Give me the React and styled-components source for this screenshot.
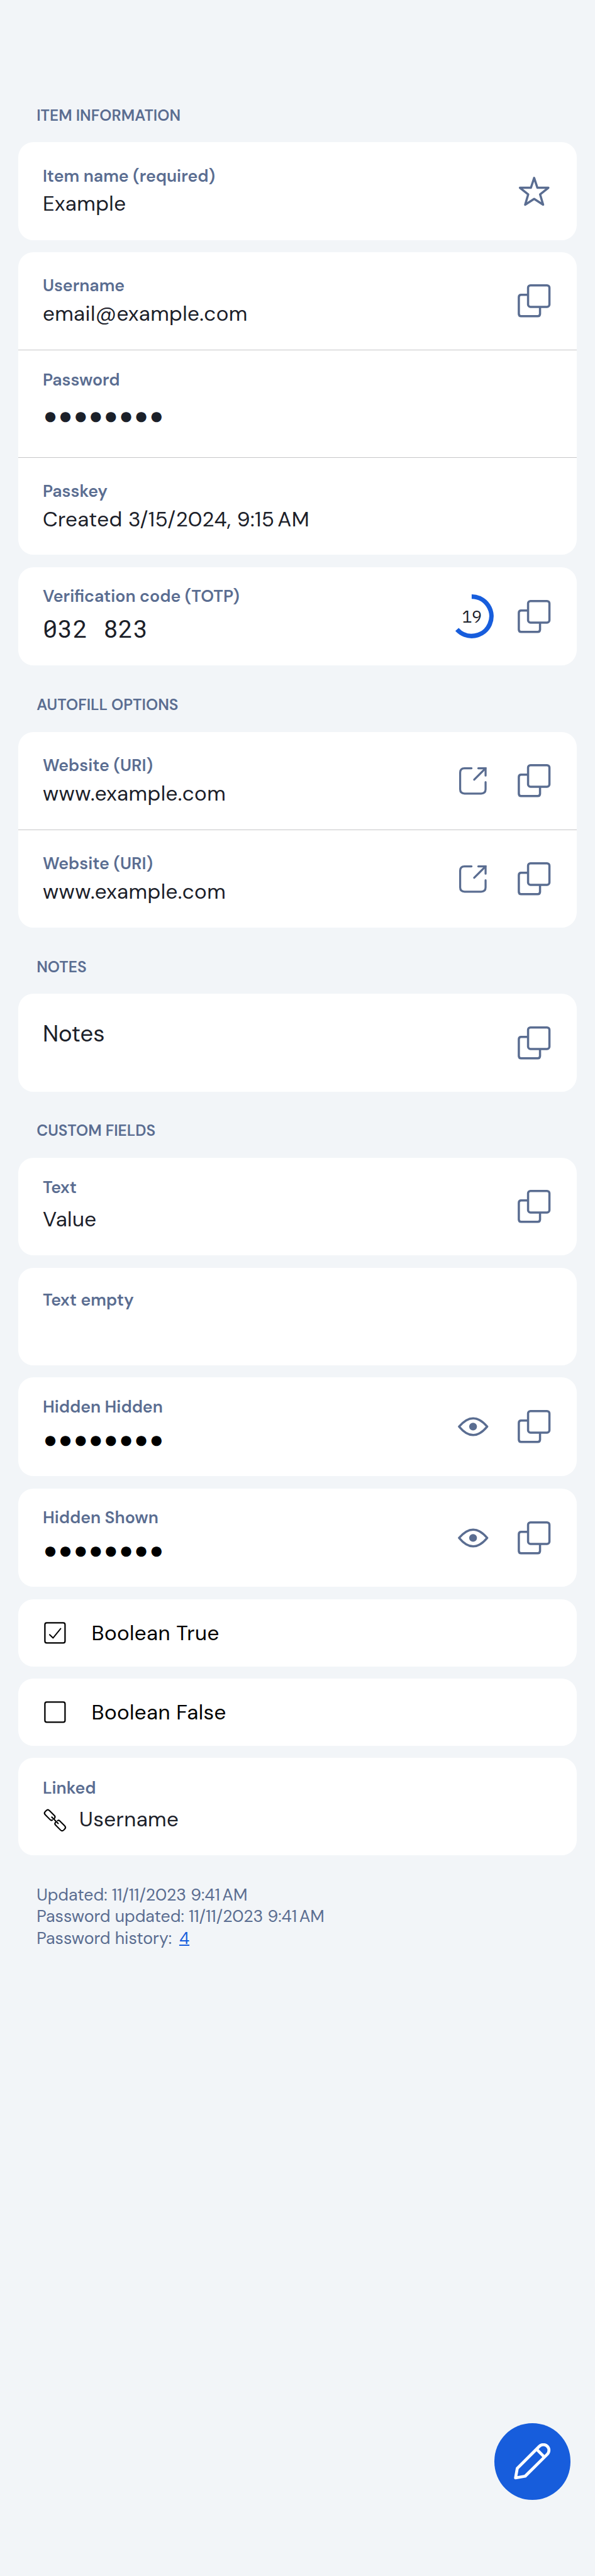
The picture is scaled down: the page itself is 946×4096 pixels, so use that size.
import React from "react";
import styled, { createGlobalStyle } from "styled-components";

/* Design units are 1170 wide; the page is laid out at 946. */
const u = (n) => `${((n * 946) / 1170).toFixed(3)}px`;

const c = {
  bg: "#f2f5f8",
  card: "#ffffff",
  muted: "#5a6d91",
  text: "#1b2029",
  black: "#000000",
  blue: "#175ddc",
  line: "#c6c6c8",
};

const sans = `"DM Sans", Inter, "Liberation Sans", sans-serif`;
const mono = `"Roboto Mono", "DejaVu Sans Mono", monospace`;

const Global = createGlobalStyle`
  body { margin: 0; background: ${c.bg}; }
  * { box-sizing: border-box; }
`;

const Page = styled.main`
  position: relative;
  display: flex;
  flex-direction: column;
  width: 946px;
  height: 4096px;
  padding: ${u(207.6)} ${u(36)} 0;
  background: ${c.bg};
  font-family: ${sans};
  color: ${c.text};
`;

const Section = styled.section`
  display: flex;
  flex-direction: column;
  gap: ${u(24.06)};
  & + & {
    margin-top: ${u(57.8)};
  }
`;

const Heading = styled.h2`
  margin: 0 0 ${u(8.4)};
  padding-left: ${u(36)};
  font-size: ${u(30.4)};
  line-height: ${u(40)};
  font-weight: 600;
  color: ${c.muted};
  text-transform: uppercase;
`;

const Card = styled.div`
  display: flex;
  flex-direction: column;
  background: ${c.card};
  border-radius: ${u(30)};
`;

const Row = styled.div`
  display: flex;
  align-items: center;
  height: ${(p) => u(p.$h || 192)};
  padding: 0 ${u(48)};
  & + & {
    border-top: 1px solid ${c.line};
  }
`;

const Body = styled.div`
  flex: 1;
  align-self: flex-start;
  display: flex;
  flex-direction: column;
  padding-top: ${(p) => u(p.$top)};
`;

const Label = styled.div`
  font-size: ${u(33)};
  line-height: ${u(46)};
  font-weight: 600;
  color: ${c.muted};
`;

const Value = styled.div`
  display: flex;
  align-items: center;
  gap: ${u(24)};
  height: ${u(64)};
  margin-top: ${(p) => u(p.$gap || 0)};
  font-size: ${(p) => u(p.$size || 41)};
  line-height: ${u(64)};
  letter-spacing: ${(p) => (p.$tight ? "0" : "0.42px")};
  white-space: nowrap;
`;

const Code = styled(Value)`
  font-family: ${mono};
  font-size: ${u(48)};
  letter-spacing: 0.75px;
`;

const Dots = styled(Value)`
  padding-left: ${u(1)};
  font-family: "Liberation Sans", sans-serif;
  font-size: ${u(46.4)};
  letter-spacing: 1.45px;
  color: ${(p) => (p.$black ? c.black : c.text)};
`;

const Actions = styled.div`
  display: flex;
  gap: ${u(48)};
`;

const Slot = styled.span`
  display: flex;
  align-items: center;
  justify-content: center;
  width: ${u(72)};
  height: ${u(72)};
  svg {
    flex: none;
    display: block;
    overflow: visible;
  }
`;

const Timer = styled(Slot)`
  display: grid;
  grid-template: 100% / 100%;
  padding-right: ${u(5)};
  > * {
    grid-area: 1 / 1;
    justify-self: center;
    align-self: center;
  }
`;

const Seconds = styled.span`
  font-family: "IBM Plex Mono", ${mono};
  font-size: ${u(33)};
  line-height: 1;
  letter-spacing: -0.5px;
`;

const CheckRow = styled(Row)`
  height: ${u(132)};
  gap: ${u(48)};
  font-size: ${u(41)};
  line-height: ${u(64)};
  letter-spacing: 0.42px;
  color: ${c.black};
`;

const CheckText = styled.span`
  padding-top: ${u(2)};
`;

const Glyph = styled.svg`
  flex: none;
  display: block;
  width: ${u(48)};
  height: ${u(48)};
  margin-top: ${(p) => u(p.$drop || 0)};
  overflow: visible;
`;

const Footer = styled.footer`
  margin-top: ${u(55.8)};
  padding-left: ${u(36)};
  font-size: ${u(33)};
  line-height: ${u(42.8)};
  color: ${c.muted};
  white-space: pre;
`;

const History = styled.a`
  margin-left: ${u(14.5)};
  color: ${c.blue};
  text-decoration: underline;
  text-decoration-thickness: 2px;
`;

const Fab = styled.button`
  position: absolute;
  right: ${u(48)};
  bottom: ${u(150)};
  display: flex;
  align-items: center;
  justify-content: center;
  width: ${u(150)};
  height: ${u(150)};
  padding: 0;
  border: 0;
  border-radius: 50%;
  background: ${c.blue};
`;

const k = 946 / 1170;
const stroke = {
  fill: "none",
  stroke: c.muted,
  strokeLinecap: "round",
  strokeLinejoin: "round",
};

const Copy = () => (
  <Slot>
    <svg width={64.7 * k} height={65 * k} viewBox="0 0 194 195">
      <g {...stroke} strokeWidth="13">
        <path d="M61 62H21Q7 62 7 76V174Q7 188 21 188H118Q132 188 132 174V134" strokeLinecap="butt" />
        <rect x="61.5" y="6.5" width="126" height="127" rx="14" />
      </g>
    </svg>
  </Slot>
);

const Star = () => (
  <Slot>
    <svg width={60 * k} height={57.3 * k} viewBox="60 52 180 172">
      <path
        {...stroke}
        strokeWidth="13"
        d="M150 59L169 117H234L185 156L203 217L150 183L97 217L115 156L66 117H131Z"
      />
    </svg>
  </Slot>
);

const External = () => (
  <Slot>
    <svg width={54 * k} height={54 * k} viewBox="69 54 162 162">
      <g {...stroke} strokeWidth="12">
        <path d="M142 60H101Q75 60 75 86V184Q75 209 101 209H199Q225 209 225 184V142" />
        <path d="M182 60H225V103" strokeLinejoin="miter" />
        <path d="M158 127L224 61" />
      </g>
    </svg>
  </Slot>
);

const Eye = () => (
  <Slot>
    <svg width={60 * k} height={38 * k} viewBox="60 80 180 114">
      <path
        {...stroke}
        strokeWidth="13"
        d="M67 137C96 103 121 88 150 88S204 103 233 137C204 172 179 187 150 187S96 172 67 137Z"
      />
      <circle cx="149.5" cy="137" r="23" fill={c.muted} />
    </svg>
  </Slot>
);

const Countdown = ({ left, total = 30 }) => {
  const a = (left / total) * 2 * Math.PI;
  const r = 38.8;
  return (
    <Timer>
      <svg width={86.4 * k} height={86.4 * k} viewBox="-43.2 -43.2 86.4 86.4">
        <path
          d={`M0 ${-r}A${r} ${r} 0 ${a > Math.PI ? 1 : 0} 1 ${r * Math.sin(a)} ${-r * Math.cos(a)}`}
          fill="none"
          stroke={c.blue}
          strokeWidth="8.9"
        />
      </svg>
      <Seconds>{left}</Seconds>
    </Timer>
  );
};

const Checkbox = ({ checked }) => (
  <Glyph viewBox="0 0 48 48" fill="none" stroke={c.black} strokeWidth="2.8" strokeLinecap="round" strokeLinejoin="round">
    <rect x="4.2" y="4.2" width="39.6" height="39.6" rx="3.5" />
    {checked && <path d="M13.5 27.5L20.3 34L35.2 15.5" strokeWidth="2.4" />}
  </Glyph>
);

const LinkIcon = () => (
  <Glyph $drop={2.5} viewBox="45 122 140 140" fill="none" stroke={c.black} strokeWidth="7.5" strokeLinecap="round" strokeLinejoin="round">
    <g transform="translate(115 192) rotate(45) translate(-115 -192)">
      <path d="M103 201Q102 209 94 209H53Q40 209 40 196V188Q40 175 53 175H94Q104 175 105 187" />
      <path d="M127 183Q128 175 136 175H177Q190 175 190 188V196Q190 209 177 209H136Q126 209 125 197" />
      <path d="M89 192H141" />
    </g>
  </Glyph>
);

const Pencil = () => (
  <svg width={72 * k} height={72 * k} viewBox="332 309 216 216">
    <g fill="none" stroke="#fff" strokeWidth="17.5" strokeLinecap="round" strokeLinejoin="round">
      <path d="M342 513L352 457L482.5 326.7A33 33 0 0 1 529.5 373.3L399 503Z" />
      <path d="M466 344L511 389" strokeLinecap="butt" />
    </g>
  </svg>
);

const Field = ({ label, value, top = 43.5, gap = -0.4, h, children }) => (
  <Row $h={h}>
    <Body $top={top}>
      <Label>{label}</Label>
      {typeof value === "string" ? <Value $gap={gap}>{value}</Value> : value}
    </Body>
    {children && <Actions>{children}</Actions>}
  </Row>
);

const MASK = "●●●●●●●●";

export default function App() {
  return (
    <Page>
      <Global />
      <Section>
        <Heading>Item information</Heading>
        <Card>
          <Field label="Item name (required)" value="Example"><Star /></Field>
        </Card>
        <Card>
          <Field label="Username" value="email@example.com"><Copy /></Field>
          <Field label="Password" h={210.5} top={35.5} value={<Dots $gap={16.4}>{MASK}</Dots>} />
          <Field label="Passkey" h={192.5} value={"Created 3/15/2024, 9:15\u202fAM"} />
        </Card>
        <Card>
          <Field label="Verification code (TOTP)" h={194} top={35.5} value={<Code $gap={8.6}>032 823</Code>}>
            <Countdown left={19} />
            <Copy />
          </Field>
        </Card>
      </Section>

      <Section>
        <Heading>Autofill options</Heading>
        <Card>
          <Field label="Website (URI)" value="www.example.com"><External /><Copy /></Field>
          <Field label="Website (URI)" value="www.example.com" h={193}><External /><Copy /></Field>
        </Card>
      </Section>

      <Section>
        <Heading>Notes</Heading>
        <Card>
          <Row>
            <Body $top={46.5}><Value $size={45} $tight>Notes</Value></Body>
            <Actions><Copy /></Actions>
          </Row>
        </Card>
      </Section>

      <Section>
        <Heading>Custom fields</Heading>
        <Card>
          <Field label="Text" value="Value" top={36.6} gap={6.2}><Copy /></Field>
        </Card>
        <Card>
          <Field label="Text empty" value={null} top={41.5} />
        </Card>
        <Card>
          <Field label="Hidden Hidden" h={194} top={35.5} value={<Dots $black $gap={9.4}>{MASK}</Dots>}>
            <Eye />
            <Copy />
          </Field>
        </Card>
        <Card>
          <Field label="Hidden Shown" h={194} top={35.5} value={<Dots $black $gap={9.4}>{MASK}</Dots>}>
            <Eye />
            <Copy />
          </Field>
        </Card>
        <Card><CheckRow><Checkbox checked /><CheckText>Boolean True</CheckText></CheckRow></Card>
        <Card><CheckRow><Checkbox /><CheckText>Boolean False</CheckText></CheckRow></Card>
        <Card>
          <Field label="Linked" top={36.6} value={<Value $gap={6.4}><LinkIcon />Username</Value>} />
        </Card>
      </Section>

      <Footer>
        <div>{"Updated: 11/11/2023 9:41\u202fAM"}</div>
        <div>{"Password updated: 11/11/2023 9:41\u202fAM"}</div>
        <div>Password history:<History>4</History></div>
      </Footer>

      <Fab aria-label="Edit"><Pencil /></Fab>
    </Page>
  );
}
